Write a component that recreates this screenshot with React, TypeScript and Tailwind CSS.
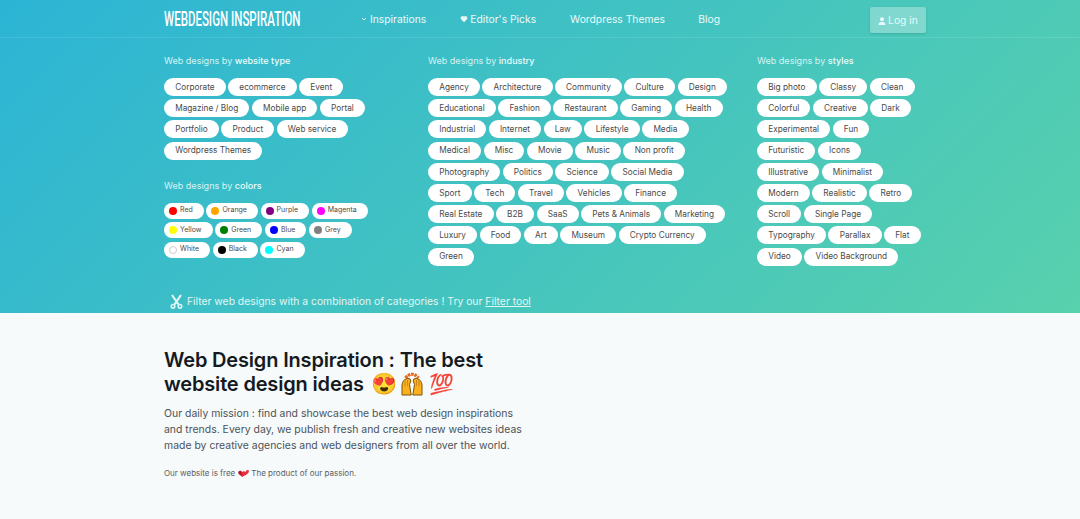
const types = ["Corporate","ecommerce","Event","Magazine / Blog","Mobile app","Portal","Portfolio","Product","Web service","Wordpress Themes"];
const industries = ["Agency","Architecture","Community","Culture","Design","Educational","Fashion","Restaurant","Gaming","Health","Industrial","Internet","Law","Lifestyle","Media","Medical","Misc","Movie","Music","Non profit","Photography","Politics","Science","Social Media","Sport","Tech","Travel","Vehicles","Finance","Real Estate","B2B","SaaS","Pets & Animals","Marketing","Luxury","Food","Art","Museum","Crypto Currency","Green"];
const styles = ["Big photo","Classy","Clean","Colorful","Creative","Dark","Experimental","Fun","Futuristic","Icons","Illustrative","Minimalist","Modern","Realistic","Retro","Scroll","Single Page","Typography","Parallax","Flat","Video","Video Background"];
const colors: [string,string][] = [["Red","#ff0000"],["Orange","#ffa500"],["Purple","#800080"],["Magenta","#ff00ff"],["Yellow","#ffff00"],["Green","#008000"],["Blue","#0000ff"],["Grey","#808080"],["White","#ffffff"],["Black","#000000"],["Cyan","#00ffff"]];

function Pill({ label }: { label: string }) {
  return <a className="flex h-[18px] items-center rounded-full bg-white px-[11.2px] text-[8.25px] text-[#4a4a4a]">{label}</a>;
}
function ColorPill({ label, color }: { label: string; color: string }) {
  return (
    <a className="flex h-4 items-center gap-[3px] rounded-full bg-white pl-[5px] pr-[11px] text-[7px] text-[#4a4a4a]">
      <span className={`h-[8px] w-[8px] rounded-full ${label === "White" ? "border border-[#cccccc]" : ""}`} style={{ backgroundColor: color }} />
      {label}
    </a>
  );
}
function Heading({ a, b }: { a: string; b: string }) {
  return <h3 className="text-[9.05px] font-normal leading-3 text-[#d5f3f2]">{a} <span className="font-medium text-[#eafafa]">{b}</span></h3>;
}
function Pills({ items, w }: { items: string[]; w: string }) {
  return <div className={`mt-[11px] flex flex-wrap gap-x-[2.4px] gap-y-[3.2px] ${w}`}>{items.map((i) => <Pill key={i} label={i} />)}</div>;
}
function HandsEmoji() {
  return (
    <svg className="ml-[3px] mr-[5px] inline-block align-[-5px]" width="24" height="24" viewBox="0 0 24 24">
      <path d="M5.5 6 Q12 -1.5 18.5 6" fill="none" stroke="#e8631c" strokeWidth="3.2" strokeDasharray="2.6 0.8" />
      <path d="M2 23 V13 Q2.5 7.5 7.5 6.5 Q11 6 10.8 9 L9.5 12.5 L11.2 23 Z" fill="#fbb11b" stroke="#7d5210" strokeWidth="1" strokeLinejoin="round" />
      <path d="M22 23 V13 Q21.5 7.5 16.5 6.5 Q13 6 13.2 9 L14.5 12.5 L12.8 23 Z" fill="#fbb11b" stroke="#7d5210" strokeWidth="1" strokeLinejoin="round" />
      <path d="M5 8.5v6M7.5 8v6M19 8.5v6M16.5 8v6" fill="none" stroke="#b87a14" strokeWidth="0.7" />
    </svg>
  );
}
function SmallHearts() {
  return (
    <svg className="mx-[2.5px] inline-block align-[-1px]" width="11" height="8" viewBox="0 0 11 8">
      <path d="M4.6 8 .9 5.2C-.8 3.4.8.9 3 1.9c.9.4 1.3 1 1.6 1.6C5.2 5 5.2 6.5 4.6 8z" fill="#b5192a" />
      <path d="M4.5 7.5C3 5.5 2.8 2.8 5.2 2.4c1-.2 1.8.2 2.3.9C7.9 1 10.7.1 10.9 2.1c.2 2-3 4.4-6.4 5.4z" fill="#ee2b3c" />
    </svg>
  );
}

export default function App() {
  return (
    <div className="min-h-[519px] bg-[#f6fafb] font-['Inter',sans-serif]">
      <div className="h-[313px] bg-[linear-gradient(135deg,#2cb4d5,#58d1ad)]">
        <header className="flex h-[38px] items-start border-b border-white/10 pl-[164px]">
          <div className="mt-[9.5px] w-[136px] origin-left scale-x-[0.59] whitespace-nowrap font-['Roboto',sans-serif] text-[19.5px] font-medium leading-[20px] text-white">WEBDESIGN INSPIRATION</div>
          <nav className="ml-[61px] mt-[12px] flex items-center text-[10.3px] leading-[14px] text-[#eafafa]">
            <span className="flex items-center gap-[3px]">
              <svg width="6" height="6" viewBox="0 0 6 6" fill="none" stroke="currentColor"><path d="M1 2l2 2 2-2" /></svg>
              Inspirations
            </span>
            <span className="ml-[34px] flex items-center gap-[2px]">
              <svg width="8" height="8" viewBox="0 0 24 24" fill="currentColor"><path d="M12 22 2.5 12A6 6 0 0 1 12 5a6 6 0 0 1 9.5 7z" /></svg>
              Editor's Picks
            </span>
            <span className="ml-[34px]">Wordpress Themes</span>
            <span className="ml-[33.5px]">Blog</span>
          </nav>
          <button className="ml-auto mr-[154px] mt-[7px] flex h-[26px] w-[56px] items-center justify-center gap-[2px] rounded-[2px] bg-white/30 pt-[1px] text-[10.3px] text-[#eafafa] shadow-sm">
            <svg width="8" height="8" viewBox="0 0 24 24" fill="currentColor"><circle cx="12" cy="7" r="6" /><path d="M2 24c0-7 4-9 10-9s10 2 10 9z" /></svg>
            Log in
          </button>
        </header>
        <div className="flex pl-[164px] pt-[17px]">
          <section className="w-[264px]">
            <Heading a="Web designs by" b="website type" />
            <Pills items={types} w="w-[240px]" />
            <div className="mt-[20px]"><Heading a="Web designs by" b="colors" /></div>
            <div className="mt-[11px] flex w-[220px] flex-wrap gap-x-[2.7px] gap-y-[3.5px]">
              {colors.map(([l, c]) => <ColorPill key={l} label={l} color={c} />)}
            </div>
          </section>
          <section className="w-[329px]">
            <Heading a="Web designs by" b="industry" />
            <Pills items={industries} w="w-[300px]" />
          </section>
          <section>
            <Heading a="Web designs by" b="styles" />
            <Pills items={styles} w="w-[166px]" />
          </section>
        </div>
        <p className="mt-[28px] flex items-center pl-[170px] text-[10.33px] leading-[14px] text-[#e2f6f3]">
          <svg className="mr-[4px]" width="13" height="15" viewBox="0 0 13 15" fill="none" stroke="currentColor" strokeWidth="2.2"><path d="M2 1l6.5 9.5M11 1 4.5 10.5" /><circle cx="3" cy="12.3" r="1.8" strokeWidth="1.5" /><circle cx="10" cy="12.3" r="1.8" strokeWidth="1.5" /></svg>
          Filter web designs with a combination of categories ! Try our <u className="ml-[3px]">Filter tool</u>
        </p>
      </div>
      <main className="pl-[164px] pt-[35px]">
        <h1 className="w-[350px] text-[20px] font-semibold leading-[24px] tracking-[-0.17px] text-[#151a1f]">Web Design Inspiration : The best website design ideas <span className="ml-[2px] text-[21px] tracking-normal">😍</span><HandsEmoji /><span className="text-[20px] tracking-normal">💯</span></h1>
        <p className="mt-[10px] w-[365px] text-[10.45px] leading-[16px] text-[#4d5358]">Our daily mission : find and showcase the best web design inspirations and trends. Every day, we publish fresh and creative new websites ideas made by creative agencies and web designers from all over the world.</p>
        <p className="mt-[13px] text-[8px] leading-3 text-[#5a6066]">Our website is free<SmallHearts />The product of our passion.</p>
      </main>
    </div>
  );
}
